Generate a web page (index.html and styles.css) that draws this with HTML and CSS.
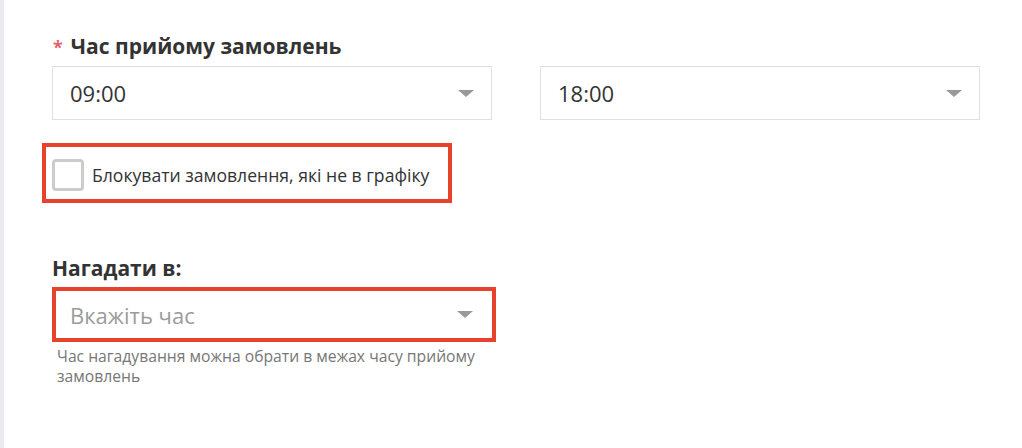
FILE: index.html
```html
<!DOCTYPE html>
<html lang="uk">
<head>
  <meta charset="UTF-8">
  <title>Графік замовлень</title>
  <link rel="stylesheet" href="styles.css">
</head>
<body>

<div class="panel">
  <div class="field-label"><span class="req">*</span>Час прийому замовлень</div>
  <div class="time-range">
    <div class="select">
      <span class="select-value">09:00</span>
      <span class="caret"></span>
    </div>
    <div class="select">
      <span class="select-value">18:00</span>
      <span class="caret"></span>
    </div>
  </div>

  <label class="check-row mark">
    <span class="checkbox"></span>
    <span class="check-text">Блокувати замовлення, які не в графіку</span>
  </label>

  <div class="field-label remind-label">Нагадати в:</div>
  <div class="select select-remind">
    <span class="select-value placeholder">Вкажіть час</span>
    <span class="caret"></span>
  </div>
  <div class="hint">Час нагадування можна обрати в межах часу прийому замовлень</div>
</div>

</body>
</html>
```

FILE: styles.css
```css
html, body { margin: 0; background: #fff; }
body { font-family: "Open Sans", "Noto Sans", sans-serif; color: #333; }

.panel {
  border-left: 4px solid #ebebef;
  min-height: 448px;
  box-sizing: border-box;
  padding: 34px 0 0 48px;
}

.field-label { font-size: 21px; font-weight: 700; line-height: 25px; color: #333; }
.field-label .req { color: #e8606a; font-size: 18px; margin: 0 8px 0 1px; }
.remind-label { margin-top: 53px; }

.time-range { display: grid; grid-template-columns: 440px 440px; gap: 48px; margin-top: 6px; }

.select {
  display: flex; align-items: center; justify-content: space-between;
  height: 54px; box-sizing: border-box;
  border: 1px solid #e0e0e0; background: #fff;
  padding: 0 17px 0 17px;
}
.select-value { font-size: 22px; line-height: 26px; color: #333; }
.select-value.placeholder { color: #9b9b9b; }
.caret {
  width: 0; height: 0;
  border-left: 8px solid transparent; border-right: 8px solid transparent;
  border-top: 7px solid #999;
}

.mark { border: 4px solid #e8412c; }
.check-row {
  display: flex; align-items: center; gap: 8px;
  width: 410px; box-sizing: border-box;
  margin: 23px 0 0 -10px;
  padding: 12px 6px 8px;
}
.checkbox {
  width: 32px; height: 32px; box-sizing: border-box;
  border: 3px solid #ccc; border-radius: 4px; background: #fff;
}
.check-text { font-size: 17.6px; color: #333; }

.select-remind {
  width: 444px; height: 55px; margin-top: 6px;
  border: 4px solid #e8412c; padding: 0 19px 0 14px;
}

.hint {
  width: 440px; margin: 4px 0 0 5px;
  font-size: 15.7px; line-height: 20px; color: #777;
}
```
